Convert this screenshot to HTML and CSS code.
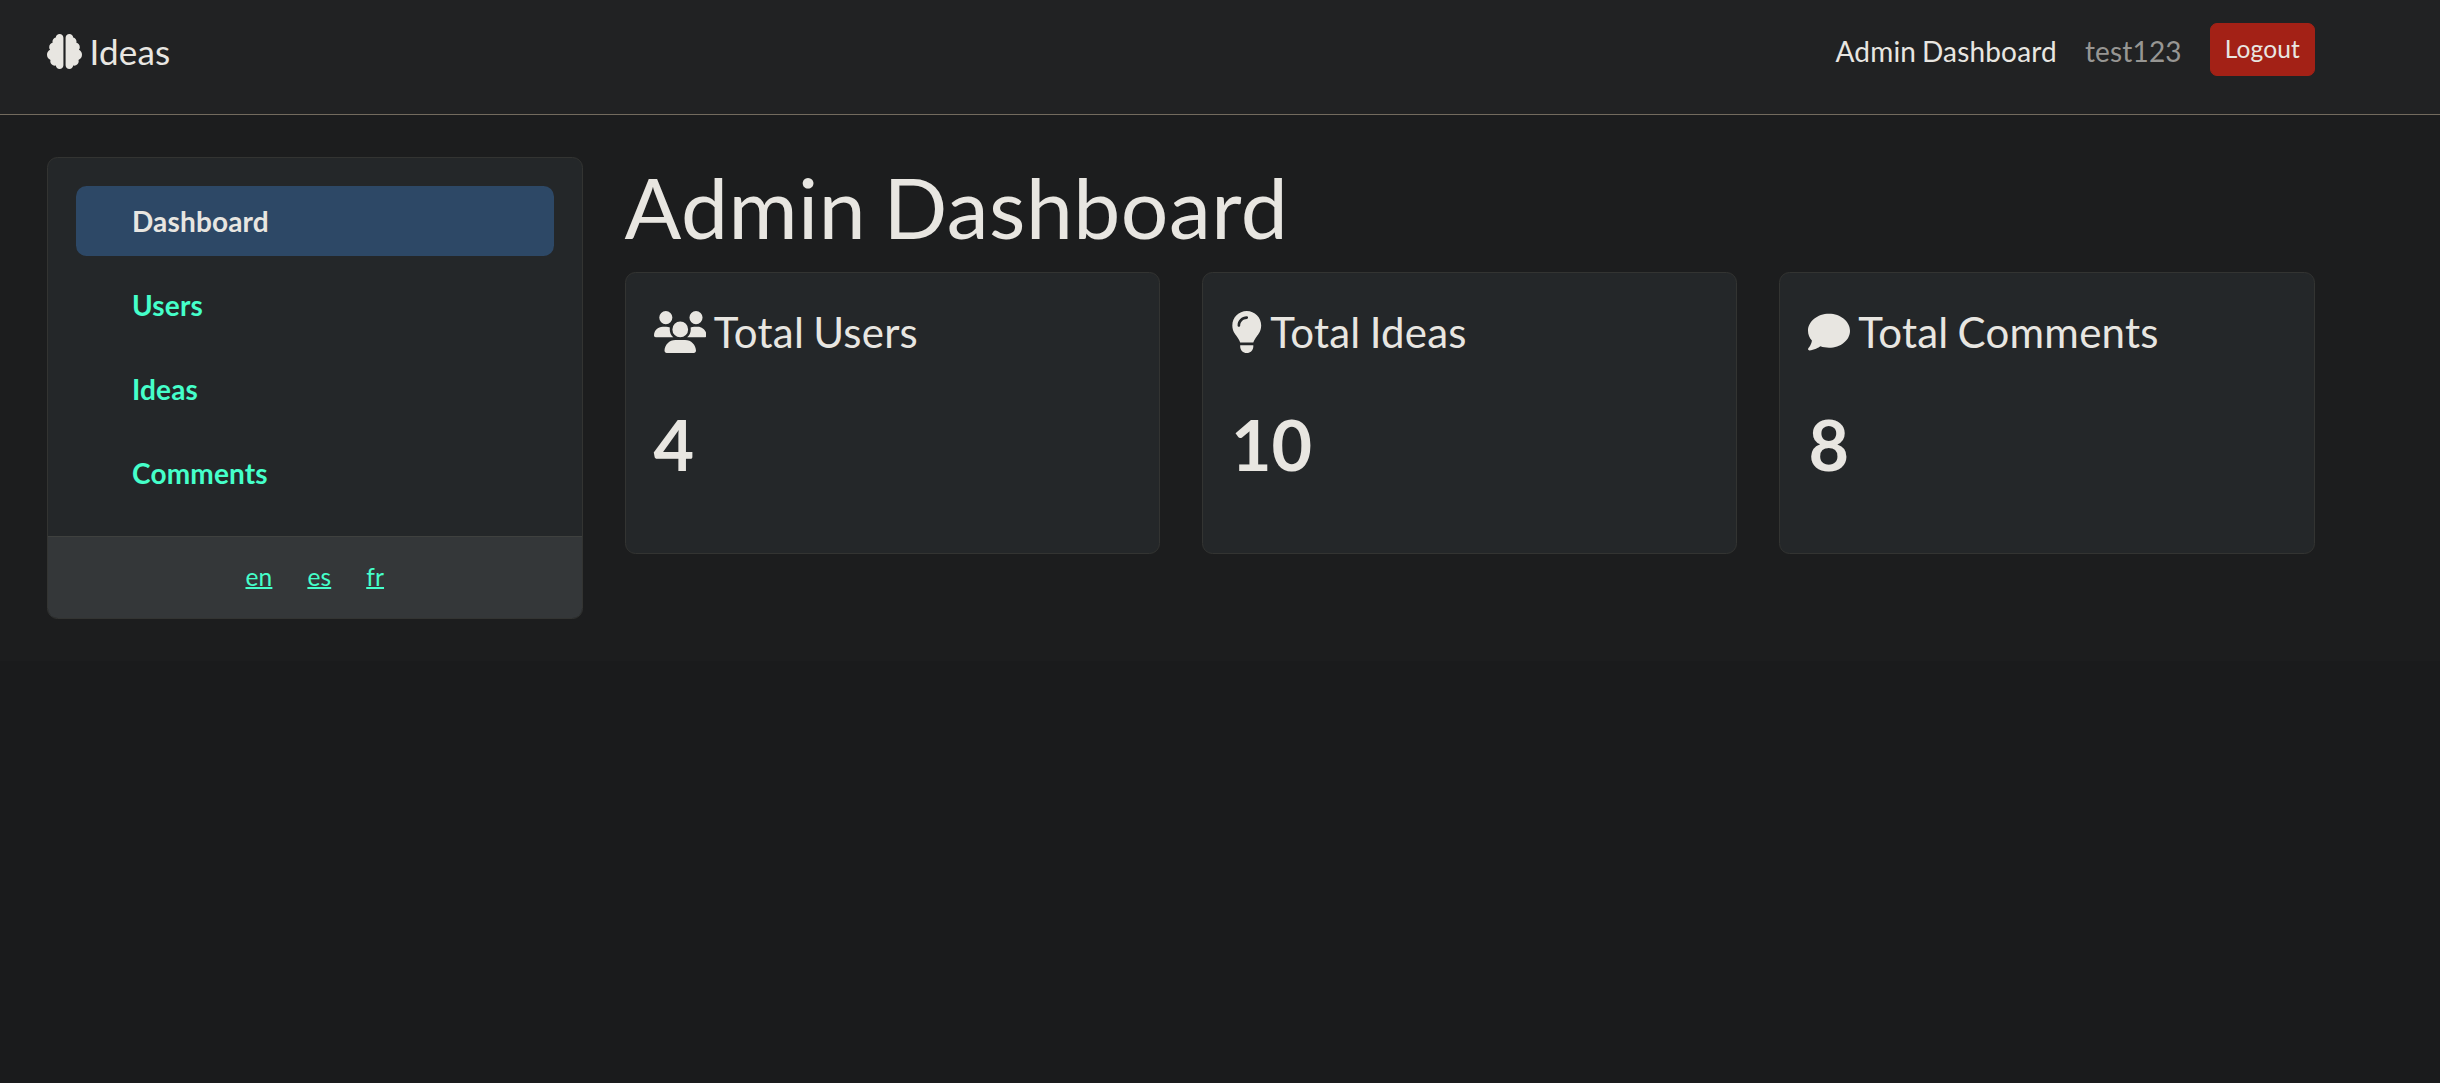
FILE: index.html
```html
<!DOCTYPE html>
<html lang="en">
<head>
<meta charset="utf-8">
<title>Admin Dashboard</title>
<link rel="stylesheet" href="styles.css">
</head>
<body>
<header class="navbar">
  <a class="brand" href="#"><svg class="icon icon-square" viewBox="0 0 512 512"><path d="M184 0c30.9 0 56 25.1 56 56V456c0 30.9-25.1 56-56 56c-28.9 0-52.7-21.9-55.7-50.1c-5.2 1.4-10.7 2.1-16.3 2.1c-35.3 0-64-28.7-64-64c0-7.4 1.3-14.6 3.6-21.2C21.4 367.4 0 338.2 0 304c0-31.9 18.7-59.5 45.8-72.3C37.1 220.8 32 207 32 192c0-30.7 21.6-56.3 50.4-62.6C80.8 123.9 80 118 80 112c0-29.9 20.6-55.1 48.3-62.1C131.3 21.9 155.1 0 184 0zM328 0c28.9 0 52.6 21.9 55.7 49.9c27.8 7 48.3 32.1 48.3 62.1c0 6-.8 11.9-2.4 17.4c28.8 6.2 50.4 31.9 50.4 62.6c0 15-5.1 28.8-13.8 39.7C493.3 244.5 512 272.1 512 304c0 34.2-21.4 63.4-51.6 74.8c2.3 6.6 3.6 13.8 3.6 21.2c0 35.3-28.7 64-64 64c-5.6 0-11.1-.7-16.3-2.1c-3 28.2-26.8 50.1-55.7 50.1c-30.9 0-56-25.1-56-56V56c0-30.9 25.1-56 56-56z"/></svg> Ideas</a>
  <nav class="nav">
    <a class="nav-link active" href="#">Admin Dashboard</a>
    <a class="nav-link" href="#">test123</a>
    <button class="logout" type="button">Logout</button>
  </nav>
</header>
<main class="page">
  <aside class="card sidebar">
    <nav class="menu">
      <a class="menu-link current" href="#">Dashboard</a>
      <a class="menu-link" href="#">Users</a>
      <a class="menu-link" href="#">Ideas</a>
      <a class="menu-link" href="#">Comments</a>
    </nav>
    <footer class="languages">
      <a href="#">en</a>
      <a href="#">es</a>
      <a href="#">fr</a>
    </footer>
  </aside>
  <section class="content">
    <h1 class="title">Admin Dashboard</h1>
    <div class="stats">
      <article class="card stat">
        <h4 class="stat-label"><svg class="icon icon-wide" viewBox="0 0 640 512"><path d="M144 0a80 80 0 1 1 0 160A80 80 0 1 1 144 0zM512 0a80 80 0 1 1 0 160A80 80 0 1 1 512 0zM0 298.7C0 239.8 47.8 192 106.7 192h42.7c15.9 0 31 3.5 44.6 9.7c-1.3 7.2-1.9 14.7-1.9 22.3c0 38.2 16.8 72.5 43.3 96c-.2 0-.4 0-.7 0H21.3C9.6 320 0 310.4 0 298.7zM405.3 320c-.2 0-.4 0-.7 0c26.6-23.5 43.3-57.8 43.3-96c0-7.6-.7-15-1.9-22.3c13.6-6.3 28.7-9.7 44.6-9.7h42.7C592.2 192 640 239.8 640 298.7c0 11.8-9.6 21.3-21.3 21.3H405.3zM224 224a96 96 0 1 1 192 0 96 96 0 1 1 -192 0zM128 485.3C128 411.7 187.7 352 261.3 352H378.7C452.3 352 512 411.7 512 485.3c0 14.7-11.9 26.7-26.7 26.7H154.7c-14.7 0-26.7-11.9-26.7-26.7z"/></svg> Total Users</h4>
        <p class="stat-value">4</p>
      </article>
      <article class="card stat">
        <h4 class="stat-label"><svg class="icon icon-narrow" viewBox="0 0 384 512"><path d="M272 384c9.6-31.9 29.5-59.1 49.2-86.2l0 0c5.2-7.1 10.4-14.2 15.4-21.4c19.8-28.5 31.4-63 31.4-100.3C368 78.8 289.2 0 192 0S16 78.8 16 176c0 37.3 11.6 71.9 31.4 100.3c5 7.2 10.2 14.3 15.4 21.4l0 0c19.8 27.1 39.7 54.4 49.2 86.2H272zM192 512c44.2 0 80-35.8 80-80V416H112v16c0 44.2 35.8 80 80 80zM112 176c0 8.8-7.2 16-16 16s-16-7.2-16-16c0-61.9 50.1-112 112-112c8.8 0 16 7.2 16 16s-7.2 16-16 16c-44.2 0-80 35.8-80 80z"/></svg> Total Ideas</h4>
        <p class="stat-value">10</p>
      </article>
      <article class="card stat">
        <h4 class="stat-label"><svg class="icon icon-square" viewBox="0 0 512 512"><path d="M512 240c0 114.9-114.6 208-256 208c-37.1 0-72.3-6.4-104.1-17.9c-11.9 8.7-31.3 20.6-54.3 30.6C73.6 471.1 44.7 480 16 480c-6.5 0-12.3-3.9-14.8-9.9c-2.5-6-1.1-12.8 3.4-17.4c.3-.3 .7-.7 1.3-1.4c1.1-1.2 2.8-3.1 4.9-5.7c4.1-5 9.6-12.4 15.2-21.6c10-16.6 19.5-38.4 21.4-62.9C17.7 326.8 0 285.1 0 240C0 125.1 114.6 32 256 32s256 93.1 256 208z"/></svg> Total Comments</h4>
        <p class="stat-value">8</p>
      </article>
    </div>
  </section>
</main>
</body>
</html>
```
FILE: styles.css
```css
* { box-sizing: border-box; }

/* An explicit root background keeps the body colour from filling the canvas. */
html { background: #1a1b1c; }

body {
  margin: 0;
  height: 661px;
  background: #1c1d1e;
  color: #e8e6e1;
  font-family: Lato, sans-serif;
  font-size: 28px;
  line-height: 1.5;
}

a { color: inherit; text-decoration: none; }

.icon {
  height: 1em;
  fill: currentColor;
  vertical-align: -0.125em;
}
.icon-square { width: 1em; }
.icon-wide { width: 1.25em; }
.icon-narrow { width: 0.75em; }

.navbar {
  display: flex;
  justify-content: space-between;
  align-items: flex-start;
  height: 115px;
  padding: 16px 125px 0 47px;
  background: #212223;
  border-bottom: 1px solid #736b5e;
}

.brand {
  padding-top: 9px;
  font-size: 35px;
  letter-spacing: 0.006em;
  word-spacing: -0.05em;
}

.nav { display: flex; align-items: flex-start; }
.nav-link {
  padding: 14px;
  color: #979693;
  letter-spacing: 0.006em;
  word-spacing: -0.05em;
}
.nav-link.active { color: #e8e6e1; }

.logout {
  margin: 7px 0 0 14px;
  padding: 7px 14px;
  border: 1px solid #a32116;
  border-radius: 7px;
  background: #a32116;
  color: #e8e6e1;
  font: 24.5px/1.5 Lato, sans-serif;
  letter-spacing: 0.006em;
}

.page {
  display: grid;
  grid-template-columns: 535.5px 1690.4px;
  gap: 42px;
  align-items: start;
  padding: 42px 0 0 47px;
}

.card {
  background: #242729;
  border: 1px solid #333432;
  border-radius: 10.5px;
}

.sidebar { overflow: hidden; }

.menu {
  display: flex;
  flex-direction: column;
  gap: 14px;
  padding: 28px;
}
.menu-link {
  padding: 14px 56px;
  border-radius: 10.5px;
  color: #45ffca;
  font-weight: 700;
  letter-spacing: 0.006em;
}
.menu-link.current { background: #2d4866; color: #e8e6e1; }

.languages {
  display: flex;
  justify-content: center;
  gap: 35px;
  height: 82px;
  padding-top: 22px;
  background: #343739;
  border-top: 1px solid #3f413f;
  color: #45ffca;
  font-size: 24.5px;
  letter-spacing: 0.006em;
}
.languages a {
  text-decoration: underline;
  text-decoration-thickness: 2px;
}

.title {
  margin: 0 0 14px;
  font-size: 84px;
  font-weight: 400;
  line-height: 1.2;
  letter-spacing: 0.006em;
  word-spacing: -0.055em;
}

.stats {
  display: grid;
  grid-template-columns: repeat(3, 1fr);
  gap: 42px;
}

.stat { height: 282px; padding: 34px 28px 0; }

.stat-label {
  margin: 0 0 45px;
  font-size: 42px;
  font-weight: 400;
  line-height: 1.2;
  letter-spacing: 0.006em;
  word-spacing: -0.045em;
}
.stat-value {
  margin: 0;
  font-size: 70px;
  font-weight: 700;
  line-height: 1.2;
}
```
